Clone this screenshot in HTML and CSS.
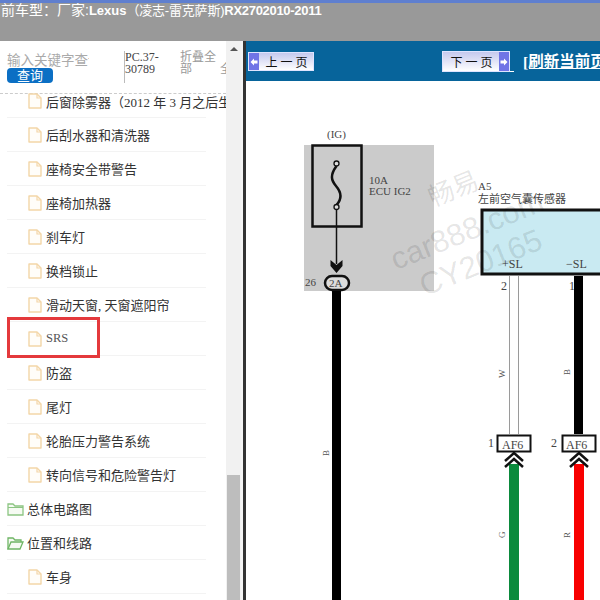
FILE: index.html
```html
<!DOCTYPE html>
<html lang="zh">
<head>
    <meta charset="UTF-8">
    <meta name="viewport" content="width=device-width, initial-scale=1.0">
    <title>电路图</title>
    <link rel="stylesheet" href="styles.css">
</head>
<body>
    <svg width="0" height="0" class="defs">
        <symbol id="file" viewBox="0 0 14 16">
            <path d="M1 1 h8 l4 4 v10 h-12 z" fill="#fffdf9" stroke="#f3d6a8" stroke-width="1.4" stroke-linejoin="round"/>
            <path d="M9 1 v4 h4" fill="none" stroke="#f3d6a8" stroke-width="1.2"/>
        </symbol>
        <symbol id="folder" viewBox="0 0 17 14">
            <path d="M1 13 v-11 h5 l2 2 h8 v9 z" fill="#f6fbf3" stroke="#8cc583" stroke-width="1.3"/>
            <path d="M1 5.500 h15" stroke="#8cc583" stroke-width="1"/>
        </symbol>
        <symbol id="folder-open" viewBox="0 0 17 14">
            <path d="M1 13 v-11 h5 l2 2 h6 v2" fill="#f6fbf3" stroke="#6fb565" stroke-width="1.3"/>
            <path d="M1 13 l3 -7 h12 l-3 7 z" fill="#f6fbf3" stroke="#6fb565" stroke-width="1.3"/>
        </symbol>
        <symbol id="arrow-left" viewBox="0 0 8 8">
            <path d="M0.500 4 L4 0.500 V2.500 H7.500 V5.500 H4 V7.500 Z" fill="#fff"/>
        </symbol>
        <symbol id="arrow-right" viewBox="0 0 8 8">
            <path d="M7.500 4 L4 0.500 V2.500 H0.500 V5.500 H4 V7.500 Z" fill="#fff"/>
        </symbol>
    </svg>

    <div class="topbar"><span class="head">前车型：厂家:</span><b>Lexus</b><span class="brand">（凌志-雷克萨斯)</span><b class="model">RX2702010-2011</b></div>

    <div class="main">
        <div class="side">
            <div class="side-panel">
                <div class="search">
                    <div class="search-box">
                        <div class="keyword">输入关键字查询</div>
                        <div class="query">查询</div>
                    </div>
                    <div class="pc">PC.37-30789</div>
                    <div class="fold">折叠全部</div>
                    <div class="more">全</div>
                </div>
                <div class="tree">
                    <div class="row sub first"><svg class="ico"><use href="#file"/></svg><span>后窗除雾器（2012 年 3 月之后生产）</span></div>
                    <div class="row sub"><svg class="ico"><use href="#file"/></svg><span>后刮水器和清洗器</span></div>
                    <div class="row sub"><svg class="ico"><use href="#file"/></svg><span>座椅安全带警告</span></div>
                    <div class="row sub"><svg class="ico"><use href="#file"/></svg><span>座椅加热器</span></div>
                    <div class="row sub"><svg class="ico"><use href="#file"/></svg><span>刹车灯</span></div>
                    <div class="row sub"><svg class="ico"><use href="#file"/></svg><span>换档锁止</span></div>
                    <div class="row sub"><svg class="ico"><use href="#file"/></svg><span>滑动天窗, 天窗遮阳帘</span></div>
                    <div class="row sub"><svg class="ico"><use href="#file"/></svg><span class="srs">SRS</span><div class="mark"></div></div>
                    <div class="row sub"><svg class="ico"><use href="#file"/></svg><span>防盗</span></div>
                    <div class="row sub"><svg class="ico"><use href="#file"/></svg><span>尾灯</span></div>
                    <div class="row sub"><svg class="ico"><use href="#file"/></svg><span>轮胎压力警告系统</span></div>
                    <div class="row sub"><svg class="ico"><use href="#file"/></svg><span>转向信号和危险警告灯</span></div>
                    <div class="row"><svg class="ico-f"><use href="#folder"/></svg><span>总体电路图</span></div>
                    <div class="row"><svg class="ico-f"><use href="#folder-open"/></svg><span>位置和线路</span></div>
                    <div class="row sub"><svg class="ico"><use href="#file"/></svg><span>车身</span></div>
                </div>
            </div>
            <div class="scroll">
                <div class="arrow"></div>
                <div class="thumb"></div>
            </div>
        </div>

        <div class="content">
            <div class="toolbar">
                <div class="pager prev"><span class="cap"><svg class="cap-ico"><use href="#arrow-left"/></svg></span><span class="label">上一页</span></div>
                <div class="pager next"><span class="label">下一页</span><span class="cap"><svg class="cap-ico"><use href="#arrow-right"/></svg></span></div>
                <div class="tick"></div>
                <a class="refresh">[刷新当前页]</a>
            </div>
            <div class="sheet">
                <svg class="diagram" width="354" height="519" viewBox="246 81 354 519">
                    <!-- fuse block -->
                    <rect x="304" y="145" width="130" height="146" fill="#cbcbcb"/>
                    <text x="327" y="138" class="t">(IG)</text>
                    <rect x="312.500" y="145.500" width="49" height="81" fill="none" stroke="#111" stroke-width="2.500"/>
                    <path d="M336.500 166 C330 175 331 180 336 186 C342 193 342 199 336.500 205" fill="none" stroke="#111" stroke-width="2.500"/>
                    <circle cx="336.500" cy="163.500" r="2.500" fill="#ddd" stroke="#111" stroke-width="1.300"/>
                    <circle cx="336.500" cy="207" r="2.500" fill="#ddd" stroke="#111" stroke-width="1.300"/>
                    <text x="369" y="184" class="t">10A</text>
                    <text x="369" y="195" class="t">ECU IG2</text>
                    <path d="M336.500 209 V264" stroke="#111" stroke-width="1.500"/>
                    <path d="M330.500 260 L336.500 265 L342.500 260 V266 L336.500 273 L330.500 266 Z" fill="#111"/>
                    <text x="305" y="286" class="t">26</text>
                    <rect x="325" y="276" width="24" height="14" rx="7" fill="#ddd" stroke="#111" stroke-width="2.500"/>
                    <text x="329" y="287" class="t">2A</text>
                    <rect x="332" y="291" width="9" height="309" fill="#000"/>
                    <text x="329" y="456" class="wire" transform="rotate(-90 329 456)">B</text>

                    <!-- sensor -->
                    <text x="478" y="190" class="t">A5</text>
                    <text x="478" y="203" class="t">左前空气囊传感器</text>
                    <rect x="482" y="210" width="130" height="64" fill="#c9eaf2" stroke="#111" stroke-width="3"/>
                    <text x="502" y="268" class="t lg">+SL</text>
                    <text x="566" y="268" class="t lg">−SL</text>
                    <text x="501" y="290" class="t lg">2</text>
                    <text x="569" y="290" class="t lg">1</text>
                    <path d="M509.500 276 V434 M518.500 276 V434" stroke="#9a9a9a" stroke-width="1"/>
                    <rect x="574" y="276" width="9" height="158" fill="#000"/>
                    <text x="505" y="378" class="wire" transform="rotate(-90 505 378)">W</text>
                    <text x="570" y="375" class="wire" transform="rotate(-90 570 375)">B</text>

                    <!-- connectors -->
                    <text x="488" y="447" class="t lg">1</text>
                    <rect x="497.500" y="435.500" width="33" height="16" fill="#fff" stroke="#111" stroke-width="2"/>
                    <text x="502" y="449" class="t lg">AF6</text>
                    <text x="551" y="447" class="t lg">2</text>
                    <rect x="562.500" y="435.500" width="33" height="16" fill="#fff" stroke="#111" stroke-width="2"/>
                    <text x="566" y="449" class="t lg">AF6</text>
                    <rect x="509" y="464" width="10" height="136" fill="#0b8a3c"/>
                    <rect x="574" y="464" width="10" height="136" fill="#f80000"/>
                    <path d="M505 461 L514 453 L523 461 M505 467 L514 459 L523 467" fill="none" stroke="#111" stroke-width="2.500"/>
                    <path d="M570 461 L579 453 L588 461 M570 467 L579 459 L588 467" fill="none" stroke="#111" stroke-width="2.500"/>
                    <text x="505" y="538" class="wire" transform="rotate(-90 505 538)">G</text>
                    <text x="570" y="538" class="wire" transform="rotate(-90 570 538)">R</text>

                    <!-- watermark -->
                    <g class="wm" transform="rotate(-22 470 235)">
                        <text x="446" y="195" font-size="26">畅易</text>
                        <text x="388" y="240" font-size="31">car888.com</text>
                        <text x="405" y="275" font-size="31">CY20165</text>
                    </g>
                </svg>
            </div>
        </div>
    </div>
</body>
</html>
```

FILE: styles.css
```css
* {
    box-sizing: border-box;
}
html, body {
    margin: 0;
    height: 100%;
    overflow: hidden;
}
body {
    width: 600px;
    height: 600px;
    font-family: "Liberation Serif", "Noto Sans CJK SC", serif;
    background: #fff;
}
.defs {
    position: absolute;
}
.topbar {
    height: 41px;
    border-top: 3px solid #5f7fcf;
    background: #999;
    color: #fff;
    font-family: "Liberation Sans", "Noto Sans CJK SC", sans-serif;
    font-size: 13px;
    line-height: 15px;
    white-space: nowrap;
    overflow: hidden;
    text-indent: 1px;
}
.head {
    font-size: 14px;
}
.brand {
    letter-spacing: -0.2px;
}
.model {
    letter-spacing: -0.3px;
}
.main {
    display: flex;
    height: 559px;
}
.side {
    display: flex;
    flex: none;
    width: 246px;
    background: #f4f4f4;
    border-right: 3px solid #333;
}
.side-panel {
    width: 226px;
    flex: none;
    overflow: hidden;
    background: #fff;
}
.search {
    display: flex;
    height: 53px;
    border-bottom: 1px dashed #ccc;
    padding: 8px 0 0 7px;
    font-family: "Liberation Sans", "Noto Sans CJK SC", sans-serif;
}
.search-box {
    width: 82px;
    flex: none;
    overflow: hidden;
}
.keyword {
    padding-top: 4px;
    height: 19px;
    font-size: 13.500px;
    line-height: 15px;
    color: #aaa;
    white-space: nowrap;
}
.query {
    width: 46px;
    height: 15px;
    border-radius: 4px;
    background: #0b6fc4;
    color: #fff;
    font-size: 13px;
    line-height: 15px;
    text-align: center;
}
.pc {
    width: 56px;
    flex: none;
    height: 32px;
    margin: 2px 0 0 35px;
    border-left: 1px solid #bbb;
    font-family: "Liberation Serif", serif;
    font-size: 12px;
    line-height: 12px;
    color: #444;
}
.fold {
    width: 40px;
    flex: none;
    margin-top: 2px;
    font-size: 12px;
    line-height: 12px;
    color: #999;
}
.more {
    font-size: 12px;
    line-height: 40px;
    color: #999;
}
.tree {
    padding-left: 7px;
    margin-top: -10px;
}
.row {
    position: relative;
    display: flex;
    align-items: center;
    gap: 4px;
    width: 199px;
    height: 34px;
    font-size: 13px;
    color: #333;
    white-space: nowrap;
    border-bottom: 1px solid #f3f3f3;
}
.row.first {
    width: 219px;
    overflow: hidden;
    background: linear-gradient(#f3f3f3, #f3f3f3) no-repeat 0 100% / 199px 1px;
    border-bottom: none;
}
.sub {
    padding-left: 21px;
}
.ico {
    width: 14px;
    height: 16px;
    flex: none;
}
.ico-f {
    width: 17px;
    height: 14px;
    flex: none;
    margin-right: -1px;
}
.srs {
    font-size: 12.500px;
    color: #555;
}
.mark {
    position: absolute;
    left: 0;
    top: -5px;
    width: 93px;
    height: 41px;
    border: 3px solid #e4393c;
}
.scroll {
    width: 15px;
    flex: none;
    background: #f1f1f1;
    position: relative;
}
.arrow {
    margin: 6px auto 0;
    width: 0;
    border: 4px solid transparent;
    border-top: 0;
    border-bottom: 4px solid #555;
}
.thumb {
    position: absolute;
    left: 1px;
    right: 1px;
    top: 434px;
    bottom: 0;
    background: #bdbdbd;
}
.content {
    flex: 1;
    overflow: hidden;
    min-width: 0;
}
.toolbar {
    display: flex;
    align-items: flex-start;
    height: 40px;
    padding: 11px 0 0 2px;
    background: #07649b;
    white-space: nowrap;
}
.pager {
    display: flex;
    align-items: center;
    height: 19px;
    border: 1px solid #dfe4ff;
    background: linear-gradient(#c5c9ee, #fff);
    font-family: "Liberation Sans", "Noto Sans CJK SC", sans-serif;
    font-size: 12px;
    color: #111;
    flex: none;
}
.prev {
    width: 66px;
}
.next {
    width: 68px;
    margin-left: 128px;
    margin-top: -1px;
    height: 21px;
}
.label {
    flex: 1;
    padding-left: 4px;
    text-align: center;
    letter-spacing: 3px;
}
.cap {
    display: flex;
    align-items: center;
    justify-content: center;
    width: 10px;
    align-self: stretch;
    background: #7074e6;
    flex: none;
}
.cap-ico {
    width: 8px;
    height: 8px;
}
.tick {
    width: 4px;
    height: 1px;
    margin-top: 19px;
    background: #fff;
    flex: none;
}
.refresh {
    margin-left: 9px;
    color: #fff;
    font-size: 15.500px;
    font-weight: bold;
    line-height: 20px;
    text-decoration: underline;
}
.sheet {
    height: 519px;
    overflow: hidden;
}
.diagram {
    display: block;
}
.t {
    font-family: "Liberation Serif", "Noto Sans CJK SC", serif;
    font-size: 11px;
    fill: #444;
}
.lg {
    font-size: 12px;
}
.wire {
    font-family: "Liberation Serif", serif;
    font-size: 9px;
    fill: #555;
}
.wm text {
    font-family: "Liberation Sans", "Noto Sans CJK SC", sans-serif;
    fill: #000;
    fill-opacity: 0.11;
}
```
